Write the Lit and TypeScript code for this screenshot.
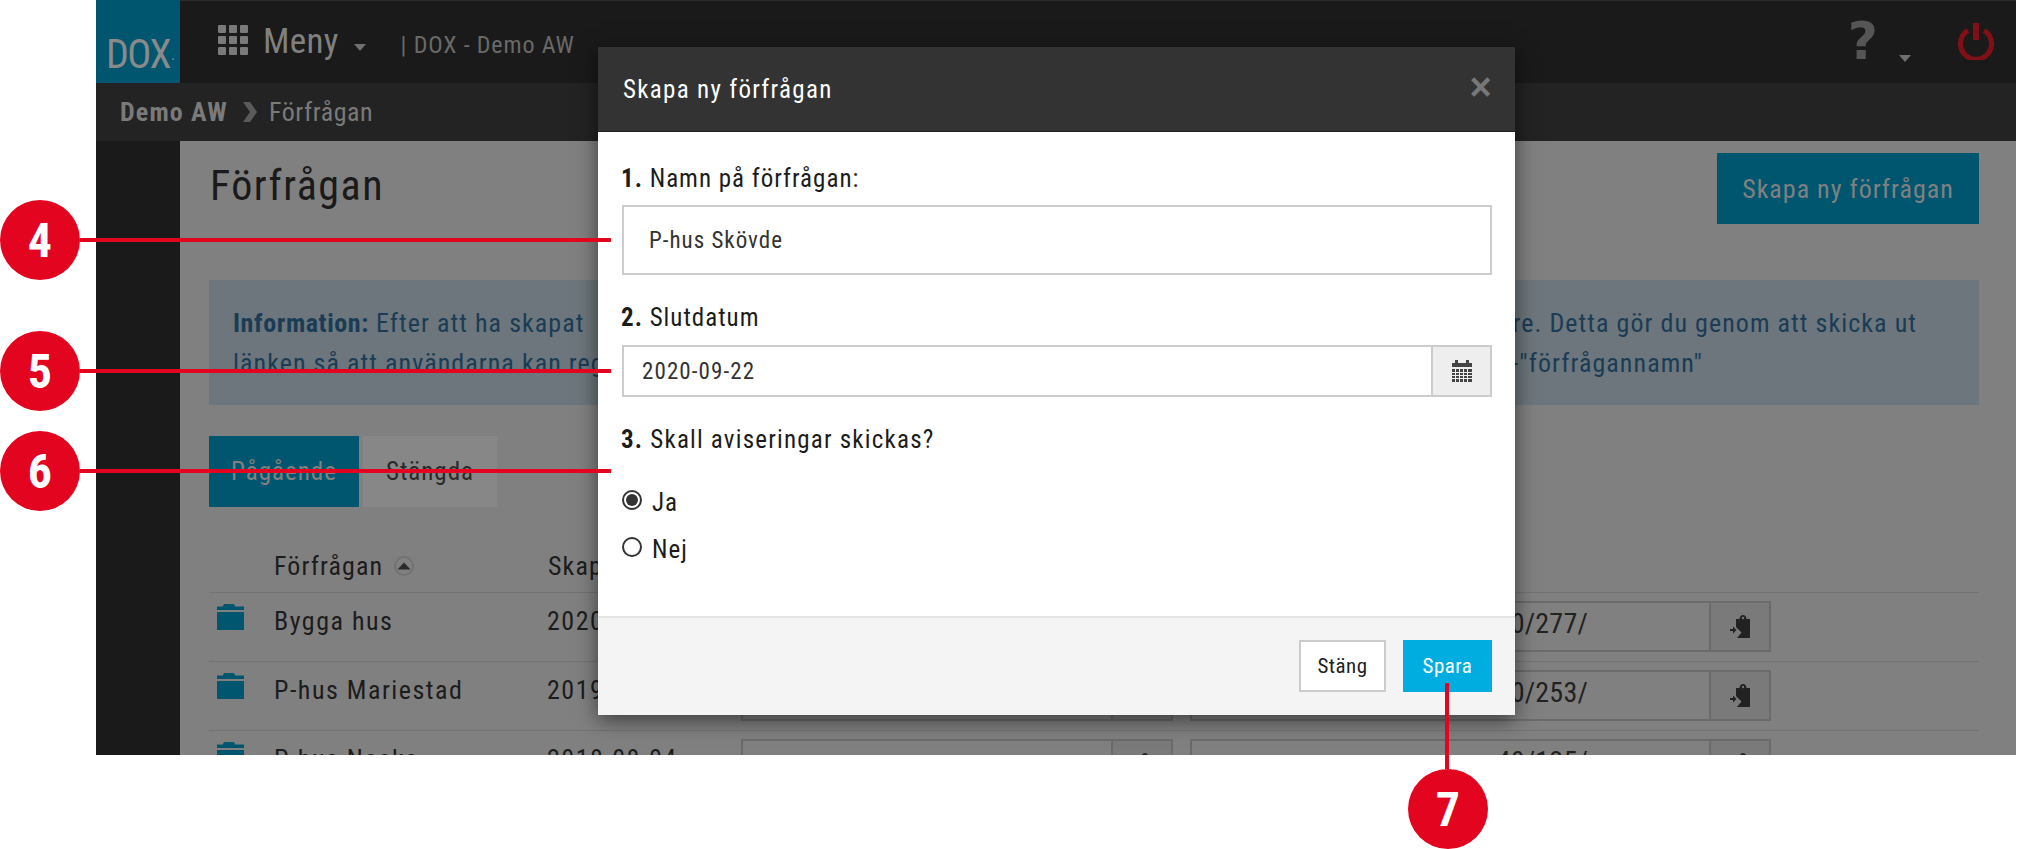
import { LitElement, html, css, svg } from "lit";
import { customElement } from "lit/decorators.js";

const clip = svg`<svg class="clip" viewBox="0 0 20 23" width="20" height="23"><path fill="#222" d="M6 4h3.500C9.500 2 11 0 13 0s3.500 2 3.500 4H20v19H7l4.500-5.500L6 12z"/><circle cx="13" cy="3" r="1.200" fill="#777"/><path fill="#222" d="M0 14h3v-2.500l3.500 3.500-3.500 3.500V16H0z"/></svg>`;
const folder = svg`<svg class="folder" viewBox="0 0 27 26" width="27" height="26"><path fill="#00566f" d="M6 2.500C6 1 7 0 8 0h8c1 0 2 1 2 2.500h9V6H0V2.500zM0 8h27v18H0z"/></svg>`;

interface Row { name: string; date: string; link: string }
const rows: Row[] = [
  { name: "Bygga hus", date: "2020", link: "40/277/" },
  { name: "P-hus Mariestad", date: "2019", link: "40/253/" },
  { name: "P-hus Nacka", date: "2018-08-04", link: "40/125/" },
];
const callouts = [
  { n: "4", y: 240 },
  { n: "5", y: 371 },
  { n: "6", y: 471 },
];

@customElement("app-root")
export class AppRoot extends LitElement {
  static styles = css`
    :host { display: block; position: relative; width: 2017px; height: 849px; background: #fff; overflow: hidden;
      font-family: "Liberation Sans Narrow", "Roboto Condensed", "DejaVu Sans Condensed", Roboto, sans-serif; }
    .frame { margin-left: 96px; width: 1920px; height: 755px; display: flex; flex-direction: column; overflow: hidden; position: relative; background: #808080; }
    .top { height: 83px; flex: none; background: #1a1a1a; box-shadow: inset 0 1px 0 #2b2b2b; display: flex; align-items: stretch; }
    .logo { width: 84px; flex: none; background: #00566f; color: #8a8a8a; font-size: 40px; line-height: 1; display: flex; align-items: flex-end; padding: 0 0 8px 10px; box-sizing: border-box; letter-spacing: -1.500px; white-space: nowrap; overflow: hidden; }
    .logo span { font-size: 16px; line-height: 30px; letter-spacing: 0; margin-left: 1px; }
    .grid { margin: 25px 0 0 38px; display: grid; grid-template-columns: repeat(3, 8px); grid-auto-rows: 8px; gap: 3px; }
    .grid i { background: #7a7a7a; border-radius: 1px; }
    .meny { margin: 22px 0 0 15px; color: #808080; font-size: 35px; line-height: 40px; letter-spacing: .3px; }
    .caret { width: 0; height: 0; border: 6px solid transparent; border-top: 7px solid #6f6f6f; border-bottom: 0; }
    .caret.c1 { margin: 44px 0 0 15px; }
    .sys { margin: 30px 0 0 35px; color: #696969; font-size: 24px; line-height: 30px; letter-spacing: .85px; }
    .right { margin-left: auto; display: flex; align-items: flex-start; padding-right: 22px; }
    .q { font-family: "DejaVu Sans", sans-serif; font-weight: 700; font-size: 52px; line-height: 50px; color: #555; margin-top: 16px; }
    .caret.c2 { margin: 55px 0 0 21px; }
    .power { margin: 23px 0 0 47px; }
    .crumb { height: 58px; flex: none; background: #232323; display: flex; align-items: center; padding-left: 24px; color: #7a7a7a; font-size: 26px; letter-spacing: .55px; }
    .crumb b { font-weight: 700; letter-spacing: 1.150px; }
    .crumb svg { margin: 0 12px 0 15px; }
    .main { flex: 1; display: flex; min-height: 0; }
    .side { width: 84px; flex: none; background: #1a1a1a; }
    .content { flex: 1; padding: 12px 37px 0 29px; min-width: 0; color: #1c1c1c; }
    .head { display: flex; justify-content: space-between; align-items: flex-start; }
    h1 { margin: 8px 0 0 1px; font-weight: 400; font-size: 42px; line-height: 50px; letter-spacing: 1.500px; color: #1a1a1a; }
    .new { width: 262px; height: 71px; background: #00566f; color: #808080; display: flex; align-items: center; justify-content: center; font-size: 26px; letter-spacing: 1px; }
    .info { margin-top: 56px; height: 125px; box-sizing: border-box; padding: 23px 24px 0; background: #6c767c; color: #1b3c55; font-size: 26px; line-height: 40px; letter-spacing: 1.050px; }
    .info b { letter-spacing: .6px; }
    .line { display: flex; justify-content: space-between; white-space: nowrap; }
    .line.l1 { padding-right: 38px; }
    .line.l2 { padding-right: 252px; }
    .tabs { margin-top: 31px; display: flex; gap: 4px; }
    .tab { height: 71px; display: flex; align-items: center; justify-content: center; font-size: 25px; letter-spacing: 1px; }
    .tab.on { width: 150px; background: #00566f; color: #808080; }
    .tab.off { width: 134px; background: #878787; color: #2a2a2a; }
    .tr { display: grid; grid-template-columns: 66px 273px 193px 449px 581px 1fr; }
    .th { height: 85px; box-sizing: border-box; padding-top: 33px; align-items: center; font-size: 26px; letter-spacing: 1.100px; color: #1c1c1c; }
    .th .sort { display: flex; align-items: center; gap: 11px; margin-left: -1px; }
    .td { height: 69px; box-sizing: border-box; border-top: 1px solid #737373; font-size: 26px; letter-spacing: 1.500px; }
    .cell { margin-left: -1px; padding-top: 13px; line-height: 30px; white-space: nowrap; }
    .folder { display: block; margin: 11px 0 0 8px; }
    .ig { display: flex; height: 51px; margin-top: 8px; box-sizing: border-box; border: 2px solid #6b6b6b; }
    .ig .val { flex: 1; display: flex; align-items: center; justify-content: flex-end; padding: 0 121px 6px 0; color: #222; font-size: 28px; letter-spacing: .2px; }
    .ig .add { flex: none; width: 60px; display: flex; align-items: center; justify-content: center; background: #7a7a7a; border-left: 2px solid #6b6b6b; box-sizing: border-box; }
    .ig.a { margin-right: 17px; }

    .modal { position: absolute; left: 502px; top: 47px; width: 917px; height: 668px; display: flex; flex-direction: column; background: #fff; box-shadow: 0 5px 20px rgba(0,0,0,.55); color: #222; }
    .mh { height: 85px; flex: none; box-sizing: border-box; background: #333; color: #fff; display: flex; align-items: center; justify-content: space-between; padding: 0 22px 0 25px; font-size: 25px; letter-spacing: 1.300px; border-bottom: 1px solid #222; }
    .x { color: #777; font-family: "Liberation Sans", sans-serif; font-weight: 700; font-size: 38px; line-height: 30px; margin-bottom: 4px; }
    .mb { flex: 1; padding: 32px 23px 0 24px; display: flex; flex-direction: column; }
    .lab { height: 30px; line-height: 30px; font-size: 25px; letter-spacing: 1px; margin-left: -1px; color: #1c1c1c; }
    .lab b { font-weight: 700; }
    .lab.w { letter-spacing: 1.200px; }
    .f1 { height: 70px; margin-top: 11px; box-sizing: border-box; border: 2px solid #ccc; display: flex; align-items: center; padding-left: 25px; font-size: 23px; letter-spacing: 1px; color: #333; }
    .lab.m { margin-top: 28px; }
    .f2 { height: 52px; margin-top: 12px; box-sizing: border-box; border: 2px solid #ccc; display: flex; font-size: 23px; letter-spacing: 1.100px; color: #333; }
    .f2 .v { flex: 1; display: flex; align-items: center; padding-left: 18px; }
    .f2 .cal { width: 59px; box-sizing: border-box; background: #eee; border-left: 2px solid #ccc; display: flex; align-items: center; justify-content: center; }
    .radios { margin-top: 30px; display: flex; flex-direction: column; gap: 13px; }
    .r { height: 34px; display: flex; align-items: center; font-size: 25px; letter-spacing: 1px; color: #1c1c1c; gap: 10px; }
    .dot { width: 20px; height: 20px; box-sizing: border-box; border: 2px solid #333; border-radius: 50%; display: flex; align-items: center; justify-content: center; margin-top: -4px; background: #fff; }
    .dot i { width: 12px; height: 12px; border-radius: 50%; background: #333; }
    .mf { height: 99px; flex: none; box-sizing: border-box; background: #f4f4f4; border-top: 2px solid #e5e5e5; display: flex; justify-content: flex-end; gap: 17px; padding: 22px 23px 0 0; }
    .btn { height: 52px; display: flex; align-items: center; justify-content: center; box-sizing: border-box; font-size: 21px; letter-spacing: .5px; }
    .btn.s { width: 87px; background: #fff; border: 2px solid #ccc; color: #222; }
    .btn.p { width: 89px; background: #00ade1; color: #fff; }

    .bub { position: absolute; width: 80px; height: 80px; border-radius: 50%; background: #e30420; color: #fff; font-size: 48px; font-weight: 700; display: flex; align-items: center; justify-content: center; }
    .hl { position: absolute; left: 80px; width: 531px; height: 4px; background: #e30420; }
    .vl { position: absolute; left: 1445px; top: 683px; width: 4px; height: 86px; background: #e30420; }
  `;

  render() {
    return html`
      <div class="frame">
        <div class="top">
          <div class="logo">DOX<span>·</span></div>
          <div class="grid">${Array.from({ length: 9 }, () => html`<i></i>`)}</div>
          <div class="meny">Meny</div>
          <div class="caret c1"></div>
          <div class="sys">| DOX - Demo AW</div>
          <div class="right">
            <div class="q">?</div>
            <div class="caret c2"></div>
            <svg class="power" width="36" height="37" viewBox="0 0 36 37"><path d="M10 7.500a15.500 15.500 0 1 0 16 0" fill="none" stroke="#7f1016" stroke-width="5"/><path d="M18 0v17" stroke="#7f1016" stroke-width="6"/></svg>
          </div>
        </div>
        <div class="crumb"><b>Demo AW</b>
          <svg width="14" height="20" viewBox="0 0 14 20"><path fill="#5a5a5a" d="M0 0h7l7 10-7 10H0l7-10z"/></svg>
          <span>Förfrågan</span></div>
        <div class="main">
          <div class="side"></div>
          <div class="content">
            <div class="head"><h1>Förfrågan</h1><div class="new">Skapa ny förfrågan</div></div>
            <div class="info">
              <div class="line l1"><span><b>Information:</b> Efter att ha skapat</span><span>re. Detta gör du genom att skicka ut</span></div>
              <div class="line l2"><span>länken så att användarna kan reg</span><span>-"förfrågannamn"</span></div>
            </div>
            <div class="tabs"><div class="tab on">Pågående</div><div class="tab off">Stängda</div></div>
            <div class="tr th">
              <span></span>
              <span class="sort">Förfrågan
                <svg width="20" height="20" viewBox="0 0 20 20"><circle cx="10" cy="10" r="9" fill="none" stroke="#727272" stroke-width="2"/><path d="M3.500 13.500l6.500-7 6.500 7z" fill="#2a2a2a"/></svg></span>
              <span>Skapad</span>
            </div>
            ${rows.map((r) => html`
              <div class="tr td">
                <div>${folder}</div>
                <div class="cell">${r.name}</div>
                <div class="cell">${r.date}</div>
                <div class="ig a"><div class="val"></div><div class="add">${clip}</div></div>
                <div class="ig"><div class="val">${r.link}</div><div class="add">${clip}</div></div>
                <div></div>
              </div>`)}
          </div>
        </div>
        <div class="modal">
          <div class="mh"><span>Skapa ny förfrågan</span><span class="x">×</span></div>
          <div class="mb">
            <div class="lab"><b>1.</b> Namn på förfrågan:</div>
            <div class="f1">P-hus Skövde</div>
            <div class="lab m"><b>2.</b> Slutdatum</div>
            <div class="f2"><div class="v">2020-09-22</div>
              <div class="cal"><svg width="20" height="22" viewBox="0 0 20 22"><path fill="#444" d="M3 0h3v3h8V0h3v3h3v4H0V3h3zM0 9h20v13H0z"/><path stroke="#eee" stroke-width="1" d="M0 12.500h20M0 15.500h20M0 18.500h20M3.500 9v13M7.500 9v13M11.500 9v13M15.500 9v13"/></svg></div></div>
            <div class="lab m w"><b>3.</b> Skall aviseringar skickas?</div>
            <div class="radios">
              <div class="r"><span class="dot"><i></i></span>Ja</div>
              <div class="r"><span class="dot"></span>Nej</div>
            </div>
          </div>
          <div class="mf"><div class="btn s">Stäng</div><div class="btn p">Spara</div></div>
        </div>
      </div>
      ${callouts.map((c) => html`
        <div class="hl" style="top:${c.y - 2}px"></div>
        <div class="bub" style="left:0;top:${c.y - 40}px">${c.n}</div>`)}
      <div class="vl"></div>
      <div class="bub" style="left:1408px;top:769px">7</div>
    `;
  }
}
